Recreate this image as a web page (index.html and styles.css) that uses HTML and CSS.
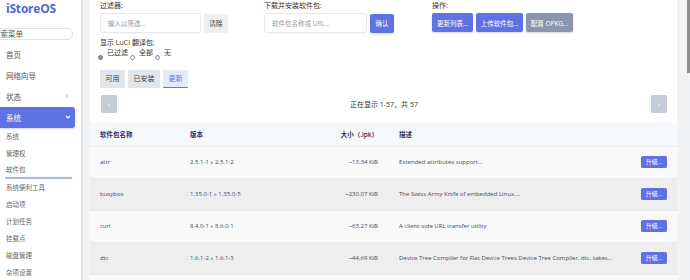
FILE: index.html
```html
<!DOCTYPE html>
<html lang="zh-CN">
<head>
    <meta charset="UTF-8">
    <meta name="viewport" content="width=device-width, initial-scale=1.0">
    <title>软件包 - iStoreOS</title>
    <link rel="stylesheet" href="styles.css">
</head>
<body>

<div class="sidebar">
    <div class="logo">iStoreOS</div>
    <div class="menu-search">搜索菜单</div>

    <ul class="menu">
        <li class="menu-item">
            <svg class="menu-icon" viewBox="0 0 8 8"><path d="M1 4 L4 1 L7 4 V7 H1 Z" fill="#555"/></svg>
            <span>首页</span>
        </li>
        <li class="menu-item">
            <svg class="menu-icon" viewBox="0 0 8 8"><circle cx="4" cy="4" r="3" fill="none" stroke="#555" stroke-width="1"/></svg>
            <span>网络向导</span>
        </li>
        <li class="menu-item">
            <svg class="menu-icon" viewBox="0 0 8 8"><rect x="1" y="1" width="6" height="6" rx="1" fill="#6f80e8"/></svg>
            <span>状态</span>
            <svg class="menu-arrow" viewBox="0 0 6 6"><path d="M2 1 L4 3 L2 5" fill="none" stroke="#aaa" stroke-width="0.8"/></svg>
        </li>
        <li class="menu-item active">
            <svg class="menu-icon" viewBox="0 0 8 8"><circle cx="4" cy="4" r="2.5" fill="#fff"/></svg>
            <span>系统</span>
            <svg class="menu-arrow" viewBox="0 0 6 6"><path d="M1 2 L3 4 L5 2" fill="none" stroke="#fff" stroke-width="1.2"/></svg>
        </li>
    </ul>

    <ul class="submenu">
        <li>系统</li>
        <li>管理权</li>
        <li class="current">软件包</li>
        <li>系统便利工具</li>
        <li>启动项</li>
        <li>计划任务</li>
        <li>挂载点</li>
        <li>磁盘管理</li>
        <li>杂项设置</li>
    </ul>
</div>

<div class="main">
    <div class="card">
        <div class="controls">
            <div class="row-top">
                <div class="group group-filter">
                    <div class="label">过滤器:</div>
                    <div class="field">
                        <div class="input input-filter">输入以筛选...</div>
                        <div class="btn btn-clear">清除</div>
                    </div>
                </div>
                <div class="group group-install">
                    <div class="label">下载并安装软件包:</div>
                    <div class="field">
                        <div class="input input-install">软件包名称或 URL...</div>
                        <div class="btn btn-primary btn-confirm">确认</div>
                    </div>
                </div>
                <div class="group">
                    <div class="label">操作:</div>
                    <div class="field">
                        <div class="btn btn-primary btn-update">更新列表...</div>
                        <div class="btn btn-primary btn-upload">上传软件包...</div>
                        <div class="btn btn-neutral btn-config">配置 OPKG...</div>
                    </div>
                </div>
            </div>

            <div class="label label-i18n">显示 LuCI 翻译包:</div>
            <div class="radios">
                <span class="radio checked"></span><span class="radio-label">已过滤</span>
                <span class="radio"></span><span class="radio-label">全部</span>
                <span class="radio"></span><span class="radio-label">无</span>
            </div>

            <div class="tabs">
                <div class="tab">可用</div>
                <div class="tab">已安装</div>
                <div class="tab active">更新</div>
            </div>

            <div class="pager">
                <div class="pager-btn">&laquo;</div>
                <div class="pager-text">正在显示 1-57，共 57</div>
                <div class="pager-btn">&raquo;</div>
            </div>
        </div>

        <table class="pkg-table">
            <colgroup>
                <col class="col-name">
                <col class="col-version">
                <col class="col-size">
                <col class="col-desc">
                <col class="col-action">
            </colgroup>
            <thead>
                <tr>
                    <th>软件包名称</th>
                    <th>版本</th>
                    <th class="size">大小（.ipk）</th>
                    <th class="desc">描述</th>
                    <th></th>
                </tr>
            </thead>
            <tbody>
                <tr>
                    <td>attr</td>
                    <td>2.5.1-1 » 2.5.1-2</td>
                    <td class="size">~13.34 KiB</td>
                    <td class="desc">Extended attributes support...</td>
                    <td class="action"><span class="btn-upgrade">升级...</span></td>
                </tr>
                <tr>
                    <td>busybox</td>
                    <td>1.35.0-1 » 1.35.0-5</td>
                    <td class="size">~230.07 KiB</td>
                    <td class="desc">The Swiss Army Knife of embedded Linux....</td>
                    <td class="action"><span class="btn-upgrade">升级...</span></td>
                </tr>
                <tr>
                    <td>curl</td>
                    <td>8.4.0-1 » 8.6.0-1</td>
                    <td class="size">~63.27 KiB</td>
                    <td class="desc">A client-side URL transfer utility</td>
                    <td class="action"><span class="btn-upgrade">升级...</span></td>
                </tr>
                <tr>
                    <td>dtc</td>
                    <td>1.6.1-2 » 1.6.1-3</td>
                    <td class="size">~44.69 KiB</td>
                    <td class="desc">Device Tree Compiler for Flat Device Trees Device Tree Compiler, dtc, takes...</td>
                    <td class="action"><span class="btn-upgrade">升级...</span></td>
                </tr>
                <tr class="row-next">
                    <td></td>
                    <td></td>
                    <td></td>
                    <td></td>
                    <td></td>
                </tr>
            </tbody>
        </table>
    </div>

    <div class="scroll-track">
        <div class="scroll-thumb"></div>
    </div>
</div>

</body>
</html>
```

FILE: styles.css
```css
body {
    font-family: "Open Sans", "Noto Sans CJK SC", sans-serif;
    margin: 0;
    padding: 0;
    display: flex;
    height: 280px;
    overflow: hidden;
    background-color: #f2f3f5;
    color: #333;
}

/* Sidebar */
.sidebar {
    width: 81px;
    flex: none;
    background-color: #fff;
    overflow: hidden;
    box-shadow: 1px 0 2px rgba(0, 0, 0, 0.12);
    position: relative;
    z-index: 1;
}
.logo {
    padding: 2px 0 0 6px;
    height: 14px;
    font-size: 12px;
    line-height: 14px;
    font-weight: bold;
    color: #5166dc;
    letter-spacing: -0.2px;
}
.menu-search {
    margin: 12px 0 0 -14px;
    width: 87px;
    height: 12px;
    box-sizing: border-box;
    border: 1px solid #e2e2e2;
    border-radius: 6px;
    padding-left: 6px;
    font-size: 7.5px;
    line-height: 10px;
    color: #555;
}
.menu {
    list-style: none;
    margin: 3.5px 0 0 -9px;
    padding: 0;
}
.menu-item {
    height: 21px;
    display: flex;
    align-items: center;
    font-size: 7.5px;
    color: #555;
    padding-right: 9px;
    position: relative;
}
.menu-icon {
    width: 8px;
    height: 8px;
    margin-right: 7px;
}
.menu-arrow {
    width: 6px;
    height: 6px;
    margin-left: auto;
    margin-right: 2px;
}
.menu-item.active {
    background-color: #5e72e4;
    color: #fff;
    border-radius: 3px;
    margin-right: 6px;
    padding-right: 0;
    box-shadow: 0 1px 2px rgba(94, 114, 228, 0.3);
}
.menu-item.active .menu-arrow {
    margin-right: 4px;
}
.submenu {
    list-style: none;
    margin: 0;
    padding: 0;
}
.submenu li {
    height: 17px;
    line-height: 17px;
    padding-left: 6px;
    font-size: 6.5px;
    color: #666;
}
.submenu li.current {
    box-sizing: border-box;
    line-height: 15px;
    margin: 0 9px 0 5px;
    padding-left: 1px;
    border-bottom: 2px solid #a9b3f2;
}

/* Main area */
.main {
    flex: 1;
    display: flex;
    padding-left: 9px;
}
.card {
    width: 587px;
    flex: none;
    background-color: #fff;
}
.scroll-track {
    flex: 1;
    display: flex;
    justify-content: flex-end;
}
.scroll-thumb {
    width: 3px;
    height: 73px;
    background-color: #8f8f8f;
}

.controls {
    padding: 1px 10px 0;
}
.row-top {
    display: flex;
}
.group {
    flex: none;
}
.group-filter {
    width: 164px;
}
.group-install {
    width: 168px;
}
.label {
    font-size: 7px;
    line-height: 9px;
    color: #333;
    margin-bottom: 3px;
}
.field {
    display: flex;
    align-items: center;
    gap: 3px;
}
.input {
    height: 20px;
    box-sizing: border-box;
    border: 1px solid #e6e8ec;
    border-radius: 3px;
    padding-left: 7px;
    font-size: 6.5px;
    color: #9a9a9a;
    display: flex;
    align-items: center;
    box-shadow: 0 1px 2px rgba(0, 0, 0, 0.04);
}
.input-filter {
    width: 101px;
}
.input-install {
    width: 103px;
}
.btn {
    height: 19px;
    box-sizing: border-box;
    font-size: 6.5px;
    border-radius: 2px;
    display: flex;
    align-items: center;
    justify-content: center;
    white-space: nowrap;
}
.btn-clear {
    width: 24px;
    background-color: #efefef;
    color: #333;
}
.btn-primary {
    background-color: #5e72e4;
    color: #fff;
    box-shadow: 0 1px 2px rgba(50, 50, 93, 0.2);
}
.btn-neutral {
    background-color: #8996ad;
    color: #fff;
    box-shadow: 0 1px 2px rgba(50, 50, 93, 0.2);
}
.btn-confirm {
    width: 24px;
}
.btn-update {
    width: 41px;
}
.btn-upload {
    width: 47px;
}
.btn-config {
    width: 47px;
}

.label-i18n {
    margin: 5px 0 0;
    line-height: 10px;
}
.radios {
    display: flex;
    align-items: flex-start;
    height: 12px;
    margin-left: -2px;
}
.radio {
    width: 5px;
    height: 5px;
    box-sizing: border-box;
    border: 0.8px solid #888;
    border-radius: 50%;
    margin-top: 6.5px;
    margin-right: 4px;
}
.radio.checked {
    background-color: #999;
    border-color: #777;
}
.radio-label {
    font-size: 7px;
    line-height: 10px;
    margin-right: 2px;
}

.tabs {
    display: flex;
    gap: 3px;
    margin-top: 10px;
}
.tab {
    height: 18px;
    box-sizing: border-box;
    padding: 0 5.5px;
    font-size: 7px;
    line-height: 18px;
    background-color: #e2e5ea;
    color: #444;
    border-radius: 1px;
}
.tab.active {
    background-color: #e6e9fb;
    color: #5e72e4;
    border-bottom: 1.5px solid #5e72e4;
    line-height: 17px;
}

.pager {
    display: flex;
    align-items: center;
    justify-content: space-between;
    margin-top: 6.5px;
    margin-left: 1px;
}
.pager-btn {
    width: 16px;
    height: 18px;
    background-color: #c6cdd8;
    color: #fff;
    font-size: 5px;
    line-height: 18px;
    text-align: center;
    border-radius: 1px;
}
.pager-text {
    font-size: 7px;
    color: #333;
}

/* Package table */
.pkg-table {
    width: 100%;
    table-layout: fixed;
    border-collapse: collapse;
    margin-top: 10px;
    font-size: 6px;
    color: #454a58;
}
.col-name { width: 100px; }
.col-version { width: 130px; }
.col-size { width: 68px; }
.col-desc { width: 242px; }
.col-action { width: 47px; }

.pkg-table th {
    height: 23px;
    padding: 0;
    text-align: left;
    font-weight: 600;
    font-size: 6.5px;
    color: #32325d;
    background-color: #f6f9fc;
    border-bottom: 1px solid #e9ecef;
}
.pkg-table td {
    height: 31px;
    padding: 0;
    white-space: nowrap;
    overflow: hidden;
    border-top: 1px solid #e6e8eb;
}
.pkg-table th:first-child,
.pkg-table td:first-child {
    padding-left: 10px;
}
.pkg-table .size {
    text-align: right;
    padding-right: 10px;
}
.pkg-table .desc {
    padding-left: 11px;
}
.pkg-table .action {
    text-align: right;
    padding-right: 10px;
}
.pkg-table tbody tr:nth-child(odd) {
    background-color: #f9f9f9;
}
.pkg-table tbody tr:nth-child(even) {
    background-color: #eeeeee;
}
.btn-upgrade {
    display: inline-block;
    width: 26px;
    height: 12px;
    line-height: 12px;
    text-align: center;
    font-size: 6px;
    color: #fff;
    background-color: #5e72e4;
    border-radius: 1.5px;
    vertical-align: middle;
}
```
